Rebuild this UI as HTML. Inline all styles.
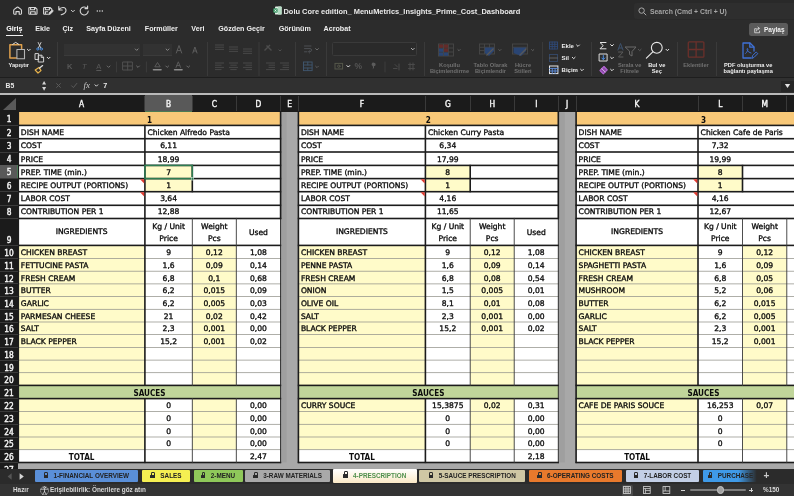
<!DOCTYPE html>
<html lang="tr"><head><meta charset="utf-8"><title>Dolu Core edition MenuMetrics Insights Prime Cost Dashboard</title>
<style>
html,body{margin:0;padding:0;background:#2c2c2c;}
body{width:794px;height:496px;overflow:hidden;font-family:"Liberation Sans",sans-serif;}
#app{will-change:transform;position:relative;width:794px;height:496px;overflow:hidden;background:#2c2c2c;}
#app div{position:absolute;}
#grid{left:0;top:0;width:794px;height:469px;overflow:hidden;}
.u{white-space:nowrap;font-family:"Liberation Sans",sans-serif;}
.b{font-weight:bold;}
.tab{top:24.3px;font-size:7.15px;color:#efefef;line-height:11px;}
.rl{font-size:5.7px;line-height:6.6px;text-align:center;white-space:nowrap;}
.dim{color:#585858;line-height:11px;}
.dimt{color:#707070;}
.sep{width:1px;background:#3a3a3a;}
.t{white-space:nowrap;font-family:"DejaVu Sans","Liberation Sans",sans-serif;font-size:7.6px;letter-spacing:0;color:#0c0c0c;-webkit-text-stroke:0.33px #0c0c0c;overflow:visible;height:12px;line-height:12px;}
.t.c{text-align:center;}
.t.l{text-align:left;}
.t.b{font-weight:bold;font-family:"DejaVu Sans Condensed","DejaVu Sans",sans-serif;font-size:8.1px;-webkit-text-stroke:0;}
.t.hd{color:#f4f4f4;font-family:"DejaVu Sans Condensed","DejaVu Sans",sans-serif;font-weight:normal;font-size:8.3px;letter-spacing:0;-webkit-text-stroke:0.4px #f4f4f4;}
.stab{top:470.3px;height:12px;border-radius:1px;font-size:6.35px;font-weight:bold;color:#222;line-height:12.4px;white-space:nowrap;text-align:center;overflow:hidden;}
.lk{display:inline-block;position:relative;width:4.4px;height:3.6px;background:#2a2a2a;border-radius:0.6px;margin-right:5.5px;vertical-align:0px;}
.lk:before{content:"";position:absolute;left:0.7px;top:-2.6px;width:1.8px;height:2.6px;border:0.7px solid #2a2a2a;border-bottom:none;border-radius:1.4px 1.4px 0 0;}

</style></head>
<body>
<div id="app">
<!-- ===== title bar ===== -->
<div style="left:0;top:0;width:794px;height:20px;background:#292929;"></div>
<div style="left:0;top:20px;width:794px;height:58px;background:#2c2c2c;"></div>
<div style="left:634px;top:3px;width:170px;height:16px;background:#2e2e2e;border-radius:3px;"></div>
<!-- quick access icons -->
<svg style="position:absolute;left:8px;top:0px" width="100" height="22" viewBox="8 0 100 22" fill="none" stroke="#d8d8d8" stroke-width="1.1" stroke-linecap="round" stroke-linejoin="round">
  <path d="M13.7 10.4 Q13.7 9.8 14.2 9.4 L17.1 7.2 Q17.6 6.9 18.1 7.2 L21 9.4 Q21.5 9.8 21.5 10.4 V13.6 Q21.5 14.2 20.9 14.2 H19.2 V11.6 H16 V14.2 H14.3 Q13.7 14.2 13.7 13.6 Z"/>
  <path d="M29.6 7.5 H35.2 L37 9.2 V13.4 Q37 14.2 36.2 14.2 H29.6 Q28.8 14.2 28.8 13.4 V8.3 Q28.8 7.5 29.6 7.5 Z M30.6 7.6 V9.8 H34.6 V7.6 M30.6 14.1 V11.8 H35.2 V14.1"/>
  <path d="M48 14.2 H44.4 Q43.6 14.2 43.6 13.4 V8.3 Q43.6 7.5 44.4 7.5 H50 L51.8 9.2 V10.2 M45.4 7.6 V9.8 H49.4 V7.6 M45.4 14.1 V11.8 H47.6"/>
  <path d="M48.8 14.4 L49.3 12.6 L52.2 9.9 L53.4 11.1 L50.5 13.9 Z" fill="#d8d8d8" stroke-width="0.7"/>
  <path d="M58.8 6.6 V10 H62.2 M59 9.8 C60.6 6.6 66 6.6 66 10.2 C66 12.6 63.8 14 61.2 14.8"/>
  <path d="M71.4 10.3 L72.9 11.8 L74.4 10.3" stroke-width="1"/>
  <path d="M87.2 8.3 A4 4 0 1 0 88.2 11 M87.6 6 V8.6 H85"/>
  <circle cx="97.3" cy="11" r="0.75" fill="#d8d8d8" stroke="none"/><circle cx="99.8" cy="11" r="0.75" fill="#d8d8d8" stroke="none"/><circle cx="102.3" cy="11" r="0.75" fill="#d8d8d8" stroke="none"/>
</svg>
<!-- title -->
<svg style="position:absolute;left:272.5px;top:6px" width="9" height="9" viewBox="0 0 9 9"><rect x="2" y="0.4" width="6.6" height="8.2" rx="0.9" fill="#e3f1e8"/><rect x="5" y="0.4" width="3.6" height="8.2" rx="0.7" fill="#b5dcc4"/><rect x="0.3" y="2.3" width="4.4" height="4.4" rx="0.7" fill="#3f9a68"/><path d="M1.6 3.5 L3.4 5.6 M3.4 3.5 L1.6 5.6" stroke="#fff" stroke-width="0.7"/></svg>
<div class="u b" style="left:283.5px;top:5.5px;font-size:7.45px;color:#e9e9e9;line-height:11px;">Dolu Core edıition_ MenuMetrics_Insights_Prime_Cost_Dashboard</div>
<svg style="position:absolute;left:637.5px;top:6.5px" width="9" height="9" viewBox="0 0 9 9" fill="none" stroke="#a9a9a9" stroke-width="1"><circle cx="3.6" cy="3.6" r="2.7"/><path d="M5.6 5.6 L8.2 8.2"/></svg>
<div class="u b" style="left:650px;top:5.5px;font-size:6.85px;color:#a6a6a6;line-height:11px;">Search (Cmd + Ctrl + U)</div>

<!-- ===== ribbon tabs ===== -->
<div class="u b tab" style="left:6.2px;color:#fff;">Giriş</div>
<div style="left:6px;top:35px;width:17px;height:1.4px;background:#f0f0f0;"></div>
<div class="u b tab" style="left:35.2px;">Ekle</div>
<div class="u b tab" style="left:62.4px;">Çiz</div>
<div class="u b tab" style="left:86.3px;">Sayfa Düzeni</div>
<div class="u b tab" style="left:144.8px;">Formüller</div>
<div class="u b tab" style="left:191.3px;">Veri</div>
<div class="u b tab" style="left:218.3px;">Gözden Geçir</div>
<div class="u b tab" style="left:278.7px;">Görünüm</div>
<div class="u b tab" style="left:323.6px;">Acrobat</div>
<!-- share -->
<div style="left:749.3px;top:23.2px;width:39.2px;height:12.9px;background:#5b5b5b;border-radius:2.5px;"></div>
<svg style="position:absolute;left:753.8px;top:26.2px" width="6.8" height="7.6" viewBox="0 0 8 9" fill="none" stroke="#e6e6e6" stroke-width="0.9" stroke-linejoin="round" stroke-linecap="round"><path d="M2.8 3.2 H0.8 V8 H6.6 V6"/><path d="M2.6 6 C2.8 3.8 4.2 2.8 5.6 2.8 M4.6 1.2 L6.6 2.8 L4.6 4.4"/></svg>
<div class="u b" style="left:764px;top:24.4px;font-size:6.5px;color:#f2f2f2;line-height:11px;">Paylaş</div>

<!-- ===== ribbon ===== -->
<!-- paste -->
<svg style="position:absolute;left:8px;top:41px" width="24" height="20" viewBox="8 41 24 20" fill="none" stroke-linejoin="round" stroke-linecap="round">
  <path d="M21.6 49 V44.8 H9.9 V58.1 H16.4" stroke="#dfa04c" stroke-width="1.5"/>
  <path d="M12.6 44.4 L15.7 42.4 L18.8 44.4" stroke="#d9d9d9" stroke-width="1"/>
  <rect x="16.9" y="49.5" width="7.6" height="9.3" stroke="#b5b5b5" stroke-width="1.1"/>
  <path d="M27.4 49.3 L28.8 50.7 L30.2 49.3" stroke="#e6e6e6" stroke-width="1"/>
</svg>
<div class="u b rl" style="left:3.7px;top:61.5px;width:30px;color:#ececec;">Yapıştır</div>
<!-- cut / copy / painter -->
<svg style="position:absolute;left:33px;top:41px" width="20" height="34" viewBox="0 0 20 34" fill="none" stroke-linecap="round" stroke-linejoin="round">
  <path d="M5.2 1.5 L7.8 7 M8 1.5 L5.4 7" stroke="#d6d6d6" stroke-width="0.9"/>
  <circle cx="4.8" cy="8" r="1.1" stroke="#4b8fe0" stroke-width="0.9"/><circle cx="8.4" cy="8" r="1.1" stroke="#4b8fe0" stroke-width="0.9"/>
  <path d="M5.5 18.5 H2 V12.6 H5.6 V18.5" stroke="#cfcfcf" stroke-width="1"/>
  <path d="M5.6 14.2 H8.6 L10.6 16 V21 H5.6 Z M8.2 14.4 V16.4 H10.4" stroke="#cfcfcf" stroke-width="1"/>
  <path d="M14.2 16.3 L15.6 17.7 L17 16.3" stroke="#e6e6e6" stroke-width="1"/>
  <path d="M2.2 29 L6 26.4 L8 29.6 L5 32 Z" stroke="#e8b34c" stroke-width="1.2"/>
  <path d="M6.6 27 L9.6 24.6" stroke="#dcdcdc" stroke-width="1.3"/>
</svg>
<div class="sep" style="left:57px;top:42px;height:34px;"></div>
<!-- font boxes -->
<div style="left:63.5px;top:43.5px;width:76.5px;height:12px;background:#323232;border-bottom:1px solid #3b3b3b;box-sizing:border-box;"></div>
<div style="left:143px;top:43.5px;width:28.5px;height:12px;background:#323232;border-bottom:1px solid #3b3b3b;box-sizing:border-box;"></div>
<svg style="position:absolute;left:60px;top:40px" width="150" height="38" viewBox="60 40 150 38" fill="none" stroke="#5d5d5d" stroke-width="1" stroke-linecap="round" stroke-linejoin="round">
  <path d="M135.3 49 L136.7 50.4 L138.1 49" stroke="#8a8a8a"/>
  <path d="M166.1 49 L167.5 50.4 L168.9 49" stroke="#8a8a8a"/>
  <path d="M176.3 53 L179 45.5 L181.7 53 M177.3 50.6 H180.7" />
  <path d="M192.8 53 L194.9 47 L197 53 M193.5 51 H196.3" />
  <path d="M107.2 66 L108.6 67.4 L110 66" stroke="#6e6e6e"/>
  <path d="M116.6 62 V72" stroke="#3d3d3d"/>
  <rect x="123" y="62" width="9.4" height="8" stroke="#505050"/><path d="M123 66 H132.4 M127.7 62 V70" stroke="#505050"/>
  <path d="M136.6 66 L138 67.4 L139.4 66" stroke="#6e6e6e"/>
  <path d="M146.4 62 V72" stroke="#3d3d3d"/>
  <path d="M155 66.5 L157.5 62.5 L160 66.5 Z" stroke="#5a5a5a"/>
  <path d="M153.5 69.8 H161" stroke="#8c8c8c" stroke-width="1.6"/>
  <path d="M165.8 66 L167.2 67.4 L168.6 66" stroke="#6e6e6e"/>
  <path d="M176 67.5 L178.3 61.8 L180.6 67.5 M176.8 65.6 H179.8" stroke="#5a5a5a"/>
  <path d="M174.6 69.8 H182" stroke="#8c8c8c" stroke-width="1.6"/>
  <path d="M186.8 66 L188.2 67.4 L189.6 66" stroke="#6e6e6e"/>
</svg>
<div class="u b dim" style="left:67px;top:60.5px;font-size:7.5px;">K</div>
<div class="u dim" style="left:82px;top:60.5px;font-size:7.5px;font-style:italic;">T</div>
<div class="u dim" style="left:96.3px;top:60.5px;font-size:7.5px;text-decoration:underline;">A</div>
<div class="sep" style="left:206.5px;top:42px;height:34px;"></div>
<!-- alignment -->
<svg style="position:absolute;left:210px;top:40px" width="90" height="38" viewBox="210 40 90 38" fill="none" stroke="#484848" stroke-width="1">
  <path d="M215 45 H224 M215 47.2 H224 M215 49.4 H224"/>
  <path d="M229 47 H238 M229 49.2 H238 M229 51.4 H238"/>
  <path d="M243 49 H252 M243 51.2 H252 M243 53.4 H252"/>
  <path d="M215 63 H224 M215 65.2 H221.5 M215 67.4 H224 M215 69.6 H221.5"/>
  <path d="M229 63 H238 M230.3 65.2 H236.7 M229 67.4 H238 M230.3 69.6 H236.7"/>
  <path d="M243 63 H252 M245.5 65.2 H252 M243 67.4 H252 M245.5 69.6 H252"/>
  <path d="M259 42 V76" stroke="#3a3a3a"/>
  <path d="M264.5 50.5 L270 45 M266.5 45.5 L271.5 50.5" stroke="#4d4d4d" stroke-width="1.4"/>
  <path d="M278.6 49.6 L280 51 L281.4 49.6" stroke="#505050"/>
  <path d="M266 63 H275 M268.6 65.2 H275 M268.6 67.4 H275 M266 69.6 H275"/>
  <path d="M280 63 H289 M282.6 65.2 H289 M282.6 67.4 H289 M280 69.6 H289"/>
</svg>
<div class="sep" style="left:295.3px;top:42px;height:34px;"></div>
<!-- wrap / merge -->
<svg style="position:absolute;left:300px;top:40px" width="125" height="38" viewBox="300 40 125 38" fill="none" stroke="#4c4c4c" stroke-width="1" stroke-linecap="round">
  <path d="M304.5 46 H311 M304.5 48.6 H310 Q311.6 48.6 311.6 50.2 Q311.6 51.8 309.4 51.8 M304.5 51.8 H307 M309.6 50.6 L308.4 51.8 L309.6 53" stroke="#505458" stroke-width="0.9"/>
  <path d="M315.6 48.6 L317 50 L318.4 48.6" stroke="#6a6a6a"/>
  <rect x="303.5" y="62" width="8.6" height="8.6" stroke="#3f546b"/><path d="M303.5 65 H312 M303.5 68 H312 M307.8 62 V65 M307.8 68 V70.6" stroke="#3f546b"/>
  <path d="M315.6 66.2 L317 67.6 L318.4 66.2" stroke="#5a5a5a"/>
</svg>
<div class="sep" style="left:326.4px;top:42px;height:34px;"></div>
<div style="left:332px;top:41.5px;width:85px;height:14.3px;background:#2a2a2a;border:1px solid #3a3a3a;border-radius:1.5px;box-sizing:border-box;"></div>
<svg style="position:absolute;left:330px;top:40px" width="95" height="38" viewBox="330 40 95 38" fill="none" stroke="#4c4c4c" stroke-width="1" stroke-linecap="round">
  <path d="M411.4 48.4 L412.8 49.8 L414.2 48.4" stroke="#bdbdbd"/>
  <rect x="335" y="63.4" width="7.6" height="5.6" stroke="#55574a"/><circle cx="338.8" cy="66.2" r="1.2" stroke="#55574a"/>
  <path d="M346.9 65.6 L348.3 67 L349.7 65.6" stroke="#e2e2e2"/>
  <path d="M385 62 V72" stroke="#3d3d3d"/>
  <path d="M393.5 68.5 H397 M399 64 V70 M395 64.5 L397.5 67" stroke="#4a4a4a"/>
  <path d="M408.5 64.5 H414.5 M408.5 68.5 H414.5 M410 63 V70 M413 63 V70" stroke="#4a4a4a"/>
</svg>
<div class="u b dim" style="left:354.5px;top:60.8px;font-size:8.5px;color:#555;">%</div>
<svg style="position:absolute;left:371px;top:62px" width="6" height="9" viewBox="0 0 6 9"><path d="M3 0.8 A1.7 1.7 0 1 1 2.9 4.2 C3.6 5.4 2.6 6.8 1.2 7.4 C2.2 6.4 2.4 5.2 1.6 3.9 A1.7 1.7 0 0 1 3 0.8 Z" fill="#5c5c5c"/></svg>
<div class="sep" style="left:423.7px;top:42px;height:34px;"></div>
<!-- conditional formatting etc -->
<svg style="position:absolute;left:436px;top:42px" width="100" height="17" viewBox="436 42 100 17" fill="none" stroke-width="0.9">
  <rect x="438.5" y="44" width="15" height="12" stroke="#474747"/><path d="M438.5 48 H453.5 M438.5 52 H453.5 M443.5 44 V56 M448.5 44 V56" stroke="#474747"/>
  <rect x="439" y="44.5" width="4.2" height="3.3" fill="#632b29" stroke="none"/><rect x="444" y="44.5" width="4.2" height="3.3" fill="#632b29" stroke="none"/><rect x="444" y="48.5" width="4.2" height="3.3" fill="#632b29" stroke="none"/>
  <rect x="439" y="48.5" width="4.2" height="3.3" fill="#2a4573" stroke="none"/><rect x="439" y="52.5" width="4.2" height="3.3" fill="#2a4573" stroke="none"/><rect x="444" y="52.5" width="4.2" height="3.3" fill="#2a4573" stroke="none"/>
  <path d="M457.6 49.3 L459 50.7 L460.4 49.3" stroke="#5f5f5f" stroke-width="1"/>
  <rect x="479.5" y="44" width="15" height="10" stroke="#474747"/><path d="M479.5 47.3 H494.5 M479.5 50.6 H494.5 M484.5 44 V54 M489.5 44 V54" stroke="#474747"/>
  <path d="M484.8 47.6 H494 V51 L489 56 L484.8 53 Z" fill="#2a4573" stroke="none"/>
  <path d="M486.5 55.5 L493.5 48.5" stroke="#585858" stroke-width="1.2"/>
  <path d="M498.4 49.3 L499.8 50.7 L501.2 49.3" stroke="#5f5f5f" stroke-width="1"/>
  <rect x="512.5" y="44" width="15" height="10" stroke="#474747"/><path d="M512.5 47.3 H527.5" stroke="#474747"/>
  <path d="M513.5 47.6 H526 V51 L521 56 L513.5 53 Z" fill="#2a4573" stroke="none"/>
  <path d="M519.5 55.5 L526.5 48.5" stroke="#585858" stroke-width="1.2"/>
  <path d="M531.3 49.3 L532.7 50.7 L534.1 49.3" stroke="#5f5f5f" stroke-width="1"/>
</svg>
<div class="u b rl dimt" style="left:419.5px;top:61.5px;width:60px;">Koşullu<br>Biçimlendirme</div>
<div class="u b rl dimt" style="left:460.5px;top:61.5px;width:60px;">Tablo Olarak<br>Biçimlendir</div>
<div class="u b rl dimt" style="left:493px;top:61.5px;width:60px;">Hücre<br>Stilleri</div>
<div class="sep" style="left:542.4px;top:42px;height:34px;"></div>
<!-- insert / delete / format -->
<svg style="position:absolute;left:547px;top:40px" width="40" height="38" viewBox="547 40 40 38" fill="none" stroke-width="0.9" stroke-linecap="round">
  <rect x="549.5" y="42" width="8" height="7" stroke="#2f4a78"/><path d="M549.5 44.3 H557.5 M549.5 46.6 H557.5 M552.2 42 V49 M554.8 42 V49" stroke="#2f4a78"/>
  <path d="M576.6 45 L578 46.4 L579.4 45" stroke="#e2e2e2" stroke-width="1"/>
  <rect x="549.5" y="54.5" width="8" height="7" stroke="#34496b"/><path d="M549.5 58 H557.5" stroke="#666"/>
  <path d="M572.3 57.3 L573.7 58.7 L575.1 57.3" stroke="#e2e2e2" stroke-width="1"/>
  <rect x="549.5" y="66" width="8.4" height="7.6" stroke="#e8e8e8" stroke-width="1"/><path d="M549.5 68.4 H557.9 M552.3 68.4 V73.6 M555.1 68.4 V73.6 M549.5 71 H557.9" stroke="#5d8fe0"/>
  <path d="M580.6 69.3 L582 70.7 L583.4 69.3" stroke="#e2e2e2" stroke-width="1"/>
</svg>
<div class="u b" style="left:561.6px;top:41.8px;font-size:6px;color:#ededed;line-height:8px;">Ekle</div>
<div class="u b" style="left:561.6px;top:54.1px;font-size:6px;color:#ededed;line-height:8px;">Sil</div>
<div class="u b" style="left:561.6px;top:66.1px;font-size:6px;color:#ededed;line-height:8px;">Biçim</div>
<div class="sep" style="left:591px;top:42px;height:34px;"></div>
<!-- editing group -->
<svg style="position:absolute;left:596px;top:40px" width="80" height="38" viewBox="596 40 80 38" fill="none" stroke-width="1" stroke-linecap="round" stroke-linejoin="round">
  <path d="M606 42.5 H600 L603.2 45.6 L600 48.8 H606" stroke="#e6e6e6"/>
  <path d="M610.6 44.6 L612 46 L613.4 44.6" stroke="#e6e6e6"/>
  <rect x="599.5" y="54" width="7.6" height="7" stroke="#dcdcdc"/><path d="M603.3 55.5 V59.5 M601.8 58 L603.3 59.6 L604.8 58" stroke="#4c8fe6"/>
  <path d="M610.6 57.3 L612 58.7 L613.4 57.3" stroke="#e6e6e6"/>
  <path d="M600 70.5 L604 66.5 L607.3 69.8 L603.3 73.8 Z" stroke="#b565d6" stroke-width="1.1" fill="#8d4aa8"/><path d="M601.8 68.7 L605.1 72" stroke="#e9d3f2" stroke-width="0.8"/>
  <path d="M610.6 69.3 L612 70.7 L613.4 69.3" stroke="#e6e6e6"/>
  <path d="M618 50 L620.5 43.5 L623 50 M619 48 H622" stroke="#3d526e"/>
  <path d="M618.5 52 H623 L618.5 57 H623" stroke="#5a5a5a"/>
  <path d="M625.5 47 H636 L632 51.5 V56 L629.5 54.5 V51.5 Z" stroke="#6a6a6a"/>
  <path d="M638.3 49.3 L639.7 50.7 L641.1 49.3" stroke="#5a5a5a"/>
  <circle cx="656.8" cy="47.8" r="5.4" stroke="#e6e6e6" stroke-width="1.1"/><path d="M652.8 51.8 L646.4 58.2" stroke="#e6e6e6" stroke-width="1.2"/>
  <path d="M666 49.3 L667.4 50.7 L668.8 49.3" stroke="#e6e6e6"/>
</svg>
<div class="u b rl dimt" style="left:599.7px;top:61.5px;width:60px;">Sırala ve<br>Filtrele</div>
<div class="u b rl" style="left:626.8px;top:61.5px;width:60px;color:#ececec;">Bul ve<br>Seç</div>
<div class="sep" style="left:676.6px;top:42px;height:34px;"></div>
<svg style="position:absolute;left:686px;top:40px" width="22" height="20" viewBox="686 40 22 20" fill="none" stroke="#6b302b" stroke-width="1.3"><rect x="688.3" y="41.8" width="15.6" height="15.4" rx="1"/><path d="M696.1 41.8 V57.2 M688.3 49.5 H703.9"/></svg>
<div class="u b rl dimt" style="left:666px;top:61.5px;width:60px;">Eklentiler</div>
<div class="sep" style="left:715.8px;top:42px;height:34px;"></div>
<svg style="position:absolute;left:740px;top:41px" width="20" height="20" viewBox="740 41 20 20" fill="none" stroke="#3f72d8" stroke-width="1.3" stroke-linejoin="round" stroke-linecap="round"><path d="M751 58 H743 V43 H750 L754 47 V51"/><path d="M749.8 43.2 V47.2 H753.8" /><path d="M745.5 53.5 C747.5 52 748.5 49 747.5 48.5 C746.5 48.5 747 52 751 53" stroke-width="0.9"/><path d="M752 58 L752.6 55.6 L756.2 52 L757.8 53.6 L754.2 57.2 Z" stroke-width="1"/></svg>
<div class="u b rl" style="left:708.2px;top:61.5px;width:80px;color:#ececec;">PDF oluşturma ve<br>bağlantı paylaşma</div>

<!-- ===== formula bar ===== -->
<div style="left:0;top:77.3px;width:794px;height:1px;background:#1e1e1e;"></div>
<div style="left:0;top:78.3px;width:794px;height:15px;background:#303030;"></div>
<div class="u b" style="left:5.6px;top:81px;font-size:6.8px;color:#e4e4e4;line-height:10px;">B5</div>
<svg style="position:absolute;left:40px;top:79px" width="70" height="14" viewBox="40 79 70 14" fill="none" stroke-linecap="round" stroke-linejoin="round">
  <path d="M42.1 84.6 L44.1 80.9 L46.1 84.6 Z M42.1 87.1 L44.1 90.8 L46.1 87.1 Z" fill="#d4d4d4" stroke="none"/>
  <path d="M56.6 83.6 L60.4 87.4 M60.4 83.6 L56.6 87.4" stroke="#5a5a5a" stroke-width="1"/>
  <path d="M71.6 85.8 L73.4 87.6 L76.8 83.4" stroke="#5a5a5a" stroke-width="1"/>
  <path d="M95 84.8 L96.4 86.2 L97.8 84.8" stroke="#dcdcdc" stroke-width="1"/>
</svg>
<div class="u" style="left:83.6px;top:79.3px;font-size:9px;color:#c9c9c9;font-style:italic;font-family:'Liberation Serif',serif;line-height:12px;">fx</div>
<div class="u b" style="left:103.3px;top:81px;font-size:7.2px;color:#ececec;line-height:10px;">7</div>
<div style="left:781px;top:80.5px;width:13px;height:11px;background:#262626;"></div>
<svg style="position:absolute;left:783.5px;top:83px" width="7" height="6" viewBox="0 0 7 6"><path d="M0.8 1 H6.2 L3.5 5 Z" fill="#e2e2e2"/></svg>

<div id="grid">
<svg style="position:absolute;left:0;top:0" width="794" height="469" viewBox="0 0 794 469"><rect x="18.00" y="112.00" width="776.00" height="357.00" fill="#a8a8a8"/><rect x="281.00" y="112.30" width="5.60" height="350.20" fill="#9f9f9f"/><rect x="559.00" y="112.30" width="5.80" height="350.20" fill="#9f9f9f"/><rect x="18.30" y="112.00" width="262.30" height="13.40" fill="#f8c878"/><rect x="18.30" y="125.40" width="262.30" height="120.00" fill="#ffffff"/><rect x="144.90" y="165.40" width="47.40" height="26.30" fill="#fffbc9"/><rect x="18.30" y="245.40" width="262.30" height="140.00" fill="#ffffff"/><rect x="18.30" y="245.40" width="126.60" height="140.00" fill="#fffbc9"/><rect x="192.30" y="245.40" width="44.00" height="140.00" fill="#fffbc9"/><rect x="18.30" y="385.40" width="262.30" height="13.20" fill="#c0d59a"/><rect x="18.30" y="398.60" width="262.30" height="63.90" fill="#ffffff"/><rect x="18.30" y="398.60" width="126.60" height="51.10" fill="#fffbc9"/><rect x="192.30" y="398.60" width="44.00" height="51.10" fill="#fffbc9"/><rect x="17.70" y="258.02" width="263.50" height="0.75" fill="#93938b"/><rect x="17.70" y="270.82" width="263.50" height="0.75" fill="#93938b"/><rect x="17.70" y="283.52" width="263.50" height="0.75" fill="#93938b"/><rect x="17.70" y="296.23" width="263.50" height="0.75" fill="#93938b"/><rect x="17.70" y="308.93" width="263.50" height="0.75" fill="#93938b"/><rect x="17.70" y="321.62" width="263.50" height="0.75" fill="#93938b"/><rect x="17.70" y="334.12" width="263.50" height="0.75" fill="#93938b"/><rect x="17.70" y="347.02" width="263.50" height="0.75" fill="#93938b"/><rect x="17.70" y="359.73" width="263.50" height="0.75" fill="#93938b"/><rect x="17.70" y="372.32" width="263.50" height="0.75" fill="#93938b"/><rect x="17.70" y="411.23" width="263.50" height="0.75" fill="#93938b"/><rect x="17.70" y="423.93" width="263.50" height="0.75" fill="#93938b"/><rect x="17.70" y="436.62" width="263.50" height="0.75" fill="#93938b"/><rect x="17.70" y="449.32" width="263.50" height="0.75" fill="#93938b"/><rect x="17.70" y="124.60" width="263.50" height="1.60" fill="#1c1c1c"/><rect x="17.70" y="137.90" width="263.50" height="1.60" fill="#1c1c1c"/><rect x="17.70" y="151.20" width="263.50" height="1.60" fill="#1c1c1c"/><rect x="17.70" y="164.60" width="263.50" height="1.60" fill="#1c1c1c"/><rect x="17.70" y="177.80" width="263.50" height="1.60" fill="#1c1c1c"/><rect x="17.70" y="190.90" width="263.50" height="1.60" fill="#1c1c1c"/><rect x="17.70" y="204.50" width="263.50" height="1.60" fill="#1c1c1c"/><rect x="17.70" y="217.70" width="263.50" height="1.60" fill="#1c1c1c"/><rect x="17.70" y="244.60" width="263.50" height="1.60" fill="#1c1c1c"/><rect x="17.70" y="384.60" width="263.50" height="1.60" fill="#1c1c1c"/><rect x="17.70" y="397.80" width="263.50" height="1.60" fill="#1c1c1c"/><rect x="17.70" y="461.70" width="263.50" height="1.60" fill="#1c1c1c"/><rect x="191.85" y="217.90" width="0.90" height="168.10" fill="#3a3a3a"/><rect x="191.85" y="398.00" width="0.90" height="65.10" fill="#3a3a3a"/><rect x="235.85" y="217.90" width="0.90" height="168.10" fill="#3a3a3a"/><rect x="235.85" y="398.00" width="0.90" height="65.10" fill="#3a3a3a"/><rect x="191.50" y="164.80" width="1.60" height="27.50" fill="#1c1c1c"/><rect x="144.10" y="124.80" width="1.60" height="261.20" fill="#1c1c1c"/><rect x="144.10" y="398.00" width="1.60" height="65.10" fill="#1c1c1c"/><rect x="17.50" y="111.40" width="1.60" height="351.70" fill="#1c1c1c"/><rect x="280.12" y="217.90" width="0.95" height="245.20" fill="#262626"/><rect x="279.80" y="111.40" width="1.60" height="107.70" fill="#1c1c1c"/><path d="M140.00 179.20 h4.2 v4.2 z" fill="#e23b30"/><path d="M140.00 192.30 h4.2 v4.2 z" fill="#e23b30"/><rect x="298.40" y="112.00" width="259.90" height="13.40" fill="#f8c878"/><rect x="298.40" y="125.40" width="259.90" height="120.00" fill="#ffffff"/><rect x="425.40" y="165.40" width="44.80" height="26.30" fill="#fffbc9"/><rect x="298.40" y="245.40" width="259.90" height="140.00" fill="#ffffff"/><rect x="298.40" y="245.40" width="127.00" height="140.00" fill="#fffbc9"/><rect x="470.20" y="245.40" width="44.00" height="140.00" fill="#fffbc9"/><rect x="298.40" y="385.40" width="259.90" height="13.20" fill="#c0d59a"/><rect x="298.40" y="398.60" width="259.90" height="63.90" fill="#ffffff"/><rect x="298.40" y="398.60" width="127.00" height="51.10" fill="#fffbc9"/><rect x="470.20" y="398.60" width="44.00" height="51.10" fill="#fffbc9"/><rect x="297.80" y="258.02" width="261.10" height="0.75" fill="#93938b"/><rect x="297.80" y="270.82" width="261.10" height="0.75" fill="#93938b"/><rect x="297.80" y="283.52" width="261.10" height="0.75" fill="#93938b"/><rect x="297.80" y="296.23" width="261.10" height="0.75" fill="#93938b"/><rect x="297.80" y="308.93" width="261.10" height="0.75" fill="#93938b"/><rect x="297.80" y="321.62" width="261.10" height="0.75" fill="#93938b"/><rect x="297.80" y="334.12" width="261.10" height="0.75" fill="#93938b"/><rect x="297.80" y="347.02" width="261.10" height="0.75" fill="#93938b"/><rect x="297.80" y="359.73" width="261.10" height="0.75" fill="#93938b"/><rect x="297.80" y="372.32" width="261.10" height="0.75" fill="#93938b"/><rect x="297.80" y="411.23" width="261.10" height="0.75" fill="#93938b"/><rect x="297.80" y="423.93" width="261.10" height="0.75" fill="#93938b"/><rect x="297.80" y="436.62" width="261.10" height="0.75" fill="#93938b"/><rect x="297.80" y="449.32" width="261.10" height="0.75" fill="#93938b"/><rect x="297.80" y="124.60" width="261.10" height="1.60" fill="#1c1c1c"/><rect x="297.80" y="137.90" width="261.10" height="1.60" fill="#1c1c1c"/><rect x="297.80" y="151.20" width="261.10" height="1.60" fill="#1c1c1c"/><rect x="297.80" y="164.60" width="261.10" height="1.60" fill="#1c1c1c"/><rect x="297.80" y="177.80" width="261.10" height="1.60" fill="#1c1c1c"/><rect x="297.80" y="190.90" width="261.10" height="1.60" fill="#1c1c1c"/><rect x="297.80" y="204.50" width="261.10" height="1.60" fill="#1c1c1c"/><rect x="297.80" y="217.70" width="261.10" height="1.60" fill="#1c1c1c"/><rect x="297.80" y="244.60" width="261.10" height="1.60" fill="#1c1c1c"/><rect x="297.80" y="384.60" width="261.10" height="1.60" fill="#1c1c1c"/><rect x="297.80" y="397.80" width="261.10" height="1.60" fill="#1c1c1c"/><rect x="297.80" y="461.70" width="261.10" height="1.60" fill="#1c1c1c"/><rect x="469.75" y="217.90" width="0.90" height="168.10" fill="#3a3a3a"/><rect x="469.75" y="398.00" width="0.90" height="65.10" fill="#3a3a3a"/><rect x="513.75" y="217.90" width="0.90" height="168.10" fill="#3a3a3a"/><rect x="513.75" y="398.00" width="0.90" height="65.10" fill="#3a3a3a"/><rect x="469.40" y="164.80" width="1.60" height="27.50" fill="#1c1c1c"/><rect x="424.60" y="124.80" width="1.60" height="261.20" fill="#1c1c1c"/><rect x="424.60" y="398.00" width="1.60" height="65.10" fill="#1c1c1c"/><rect x="297.60" y="111.40" width="1.60" height="351.70" fill="#1c1c1c"/><rect x="557.82" y="217.90" width="0.95" height="245.20" fill="#262626"/><rect x="557.50" y="111.40" width="1.60" height="107.70" fill="#1c1c1c"/><path d="M420.50 179.20 h4.2 v4.2 z" fill="#e23b30"/><path d="M420.50 192.30 h4.2 v4.2 z" fill="#e23b30"/><rect x="576.10" y="112.00" width="254.90" height="13.40" fill="#f8c878"/><rect x="576.10" y="125.40" width="254.90" height="120.00" fill="#ffffff"/><rect x="698.00" y="165.40" width="44.50" height="26.30" fill="#fffbc9"/><rect x="576.10" y="245.40" width="254.90" height="140.00" fill="#ffffff"/><rect x="576.10" y="245.40" width="121.90" height="140.00" fill="#fffbc9"/><rect x="742.50" y="245.40" width="44.30" height="140.00" fill="#fffbc9"/><rect x="576.10" y="385.40" width="254.90" height="13.20" fill="#c0d59a"/><rect x="576.10" y="398.60" width="254.90" height="63.90" fill="#ffffff"/><rect x="576.10" y="398.60" width="121.90" height="51.10" fill="#fffbc9"/><rect x="742.50" y="398.60" width="44.30" height="51.10" fill="#fffbc9"/><rect x="575.50" y="258.02" width="256.10" height="0.75" fill="#93938b"/><rect x="575.50" y="270.82" width="256.10" height="0.75" fill="#93938b"/><rect x="575.50" y="283.52" width="256.10" height="0.75" fill="#93938b"/><rect x="575.50" y="296.23" width="256.10" height="0.75" fill="#93938b"/><rect x="575.50" y="308.93" width="256.10" height="0.75" fill="#93938b"/><rect x="575.50" y="321.62" width="256.10" height="0.75" fill="#93938b"/><rect x="575.50" y="334.12" width="256.10" height="0.75" fill="#93938b"/><rect x="575.50" y="347.02" width="256.10" height="0.75" fill="#93938b"/><rect x="575.50" y="359.73" width="256.10" height="0.75" fill="#93938b"/><rect x="575.50" y="372.32" width="256.10" height="0.75" fill="#93938b"/><rect x="575.50" y="411.23" width="256.10" height="0.75" fill="#93938b"/><rect x="575.50" y="423.93" width="256.10" height="0.75" fill="#93938b"/><rect x="575.50" y="436.62" width="256.10" height="0.75" fill="#93938b"/><rect x="575.50" y="449.32" width="256.10" height="0.75" fill="#93938b"/><rect x="575.50" y="124.60" width="256.10" height="1.60" fill="#1c1c1c"/><rect x="575.50" y="137.90" width="256.10" height="1.60" fill="#1c1c1c"/><rect x="575.50" y="151.20" width="256.10" height="1.60" fill="#1c1c1c"/><rect x="575.50" y="164.60" width="256.10" height="1.60" fill="#1c1c1c"/><rect x="575.50" y="177.80" width="256.10" height="1.60" fill="#1c1c1c"/><rect x="575.50" y="190.90" width="256.10" height="1.60" fill="#1c1c1c"/><rect x="575.50" y="204.50" width="256.10" height="1.60" fill="#1c1c1c"/><rect x="575.50" y="217.70" width="256.10" height="1.60" fill="#1c1c1c"/><rect x="575.50" y="244.60" width="256.10" height="1.60" fill="#1c1c1c"/><rect x="575.50" y="384.60" width="256.10" height="1.60" fill="#1c1c1c"/><rect x="575.50" y="397.80" width="256.10" height="1.60" fill="#1c1c1c"/><rect x="575.50" y="461.70" width="256.10" height="1.60" fill="#1c1c1c"/><rect x="742.05" y="217.90" width="0.90" height="168.10" fill="#3a3a3a"/><rect x="742.05" y="398.00" width="0.90" height="65.10" fill="#3a3a3a"/><rect x="786.35" y="217.90" width="0.90" height="168.10" fill="#3a3a3a"/><rect x="786.35" y="398.00" width="0.90" height="65.10" fill="#3a3a3a"/><rect x="741.70" y="164.80" width="1.60" height="27.50" fill="#1c1c1c"/><rect x="697.20" y="124.80" width="1.60" height="261.20" fill="#1c1c1c"/><rect x="697.20" y="398.00" width="1.60" height="65.10" fill="#1c1c1c"/><rect x="575.30" y="111.40" width="1.60" height="351.70" fill="#1c1c1c"/><rect x="830.52" y="217.90" width="0.95" height="245.20" fill="#262626"/><rect x="830.20" y="111.40" width="1.60" height="107.70" fill="#1c1c1c"/><path d="M693.10 179.20 h4.2 v4.2 z" fill="#e23b30"/><path d="M693.10 192.30 h4.2 v4.2 z" fill="#e23b30"/><rect x="144.90" y="165.40" width="47.40" height="13.20" fill="none" stroke="#2e7c52" stroke-width="1.5"/><rect x="191.20" y="177.50" width="2.6" height="2.6" fill="#2e7c52" stroke="#fff" stroke-width="0.4"/></svg>
<div class="t c b" style="left:18.30px;top:114px;width:262.30px;">1</div>
<div class="t l" style="left:20.80px;top:127px;width:123.60px;">DISH NAME</div>
<div class="t l" style="left:20.80px;top:140px;width:123.60px;">COST</div>
<div class="t l" style="left:20.80px;top:154px;width:123.60px;">PRICE</div>
<div class="t l" style="left:20.80px;top:167px;width:123.60px;">PREP. TIME (min.)</div>
<div class="t l" style="left:20.80px;top:180px;width:123.60px;">RECIPE OUTPUT (PORTIONS)</div>
<div class="t l" style="left:20.80px;top:193px;width:123.60px;">LABOR COST</div>
<div class="t l" style="left:20.80px;top:206px;width:123.60px;">CONTRIBUTION PER 1</div>
<div class="t l" style="left:147.50px;top:127px;width:132.70px;">Chicken Alfredo Pasta</div>
<div class="t c" style="left:144.90px;top:140px;width:47.40px;">6,11</div>
<div class="t c" style="left:144.90px;top:154px;width:47.40px;">18,99</div>
<div class="t c" style="left:144.90px;top:167px;width:47.40px;">7</div>
<div class="t c" style="left:144.90px;top:180px;width:47.40px;">1</div>
<div class="t c" style="left:144.90px;top:193px;width:47.40px;">3,64</div>
<div class="t c" style="left:144.90px;top:206px;width:47.40px;">12,88</div>
<div class="t c" style="left:18.30px;top:226px;width:126.60px;">INGREDIENTS</div>
<div class="t c" style="left:144.90px;top:221px;width:47.40px;">Kg / Unit</div>
<div class="t c" style="left:144.90px;top:233px;width:47.40px;">Price</div>
<div class="t c" style="left:192.30px;top:221px;width:44.00px;">Weight</div>
<div class="t c" style="left:192.30px;top:233px;width:44.00px;">Pcs</div>
<div class="t c" style="left:236.30px;top:227px;width:44.30px;">Used</div>
<div class="t l" style="left:20.80px;top:247px;width:123.60px;">CHICKEN BREAST</div>
<div class="t c" style="left:144.90px;top:247px;width:47.40px;">9</div>
<div class="t c" style="left:192.30px;top:247px;width:44.00px;">0,12</div>
<div class="t c" style="left:236.30px;top:247px;width:44.30px;">1,08</div>
<div class="t l" style="left:20.80px;top:260px;width:123.60px;">FETTUCINE PASTA</div>
<div class="t c" style="left:144.90px;top:260px;width:47.40px;">1,6</div>
<div class="t c" style="left:192.30px;top:260px;width:44.00px;">0,09</div>
<div class="t c" style="left:236.30px;top:260px;width:44.30px;">0,14</div>
<div class="t l" style="left:20.80px;top:273px;width:123.60px;">FRESH CREAM</div>
<div class="t c" style="left:144.90px;top:273px;width:47.40px;">6,8</div>
<div class="t c" style="left:192.30px;top:273px;width:44.00px;">0,1</div>
<div class="t c" style="left:236.30px;top:273px;width:44.30px;">0,68</div>
<div class="t l" style="left:20.80px;top:285px;width:123.60px;">BUTTER</div>
<div class="t c" style="left:144.90px;top:285px;width:47.40px;">6,2</div>
<div class="t c" style="left:192.30px;top:285px;width:44.00px;">0,015</div>
<div class="t c" style="left:236.30px;top:285px;width:44.30px;">0,09</div>
<div class="t l" style="left:20.80px;top:298px;width:123.60px;">GARLIC</div>
<div class="t c" style="left:144.90px;top:298px;width:47.40px;">6,2</div>
<div class="t c" style="left:192.30px;top:298px;width:44.00px;">0,005</div>
<div class="t c" style="left:236.30px;top:298px;width:44.30px;">0,03</div>
<div class="t l" style="left:20.80px;top:311px;width:123.60px;">PARMESAN CHEESE</div>
<div class="t c" style="left:144.90px;top:311px;width:47.40px;">21</div>
<div class="t c" style="left:192.30px;top:311px;width:44.00px;">0,02</div>
<div class="t c" style="left:236.30px;top:311px;width:44.30px;">0,42</div>
<div class="t l" style="left:20.80px;top:323px;width:123.60px;">SALT</div>
<div class="t c" style="left:144.90px;top:323px;width:47.40px;">2,3</div>
<div class="t c" style="left:192.30px;top:323px;width:44.00px;">0,001</div>
<div class="t c" style="left:236.30px;top:323px;width:44.30px;">0,00</div>
<div class="t l" style="left:20.80px;top:336px;width:123.60px;">BLACK PEPPER</div>
<div class="t c" style="left:144.90px;top:336px;width:47.40px;">15,2</div>
<div class="t c" style="left:192.30px;top:336px;width:44.00px;">0,001</div>
<div class="t c" style="left:236.30px;top:336px;width:44.30px;">0,02</div>
<div class="t c b" style="left:18.30px;top:387px;width:262.30px;">SAUCES</div>
<div class="t c" style="left:144.90px;top:400px;width:47.40px;">0</div>
<div class="t c" style="left:236.30px;top:400px;width:44.30px;">0,00</div>
<div class="t c" style="left:144.90px;top:413px;width:47.40px;">0</div>
<div class="t c" style="left:236.30px;top:413px;width:44.30px;">0,00</div>
<div class="t c" style="left:144.90px;top:426px;width:47.40px;">0</div>
<div class="t c" style="left:236.30px;top:426px;width:44.30px;">0,00</div>
<div class="t c" style="left:144.90px;top:438px;width:47.40px;">0</div>
<div class="t c" style="left:236.30px;top:438px;width:44.30px;">0,00</div>
<div class="t c b" style="left:18.30px;top:451px;width:126.60px;">TOTAL</div>
<div class="t c" style="left:236.30px;top:451px;width:44.30px;">2,47</div>
<div class="t c b" style="left:298.40px;top:114px;width:259.90px;">2</div>
<div class="t l" style="left:300.90px;top:127px;width:124.00px;">DISH NAME</div>
<div class="t l" style="left:300.90px;top:140px;width:124.00px;">COST</div>
<div class="t l" style="left:300.90px;top:154px;width:124.00px;">PRICE</div>
<div class="t l" style="left:300.90px;top:167px;width:124.00px;">PREP. TIME (min.)</div>
<div class="t l" style="left:300.90px;top:180px;width:124.00px;">RECIPE OUTPUT (PORTIONS)</div>
<div class="t l" style="left:300.90px;top:193px;width:124.00px;">LABOR COST</div>
<div class="t l" style="left:300.90px;top:206px;width:124.00px;">CONTRIBUTION PER 1</div>
<div class="t l" style="left:428.00px;top:127px;width:129.90px;">Chicken Curry Pasta</div>
<div class="t c" style="left:425.40px;top:140px;width:44.80px;">6,34</div>
<div class="t c" style="left:425.40px;top:154px;width:44.80px;">17,99</div>
<div class="t c" style="left:425.40px;top:167px;width:44.80px;">8</div>
<div class="t c" style="left:425.40px;top:180px;width:44.80px;">1</div>
<div class="t c" style="left:425.40px;top:193px;width:44.80px;">4,16</div>
<div class="t c" style="left:425.40px;top:206px;width:44.80px;">11,65</div>
<div class="t c" style="left:298.40px;top:226px;width:127.00px;">INGREDIENTS</div>
<div class="t c" style="left:425.40px;top:221px;width:44.80px;">Kg / Unit</div>
<div class="t c" style="left:425.40px;top:233px;width:44.80px;">Price</div>
<div class="t c" style="left:470.20px;top:221px;width:44.00px;">Weight</div>
<div class="t c" style="left:470.20px;top:233px;width:44.00px;">Pcs</div>
<div class="t c" style="left:514.20px;top:227px;width:44.10px;">Used</div>
<div class="t l" style="left:300.90px;top:247px;width:124.00px;">CHICKEN BREAST</div>
<div class="t c" style="left:425.40px;top:247px;width:44.80px;">9</div>
<div class="t c" style="left:470.20px;top:247px;width:44.00px;">0,12</div>
<div class="t c" style="left:514.20px;top:247px;width:44.10px;">1,08</div>
<div class="t l" style="left:300.90px;top:260px;width:124.00px;">PENNE PASTA</div>
<div class="t c" style="left:425.40px;top:260px;width:44.80px;">1,6</div>
<div class="t c" style="left:470.20px;top:260px;width:44.00px;">0,09</div>
<div class="t c" style="left:514.20px;top:260px;width:44.10px;">0,14</div>
<div class="t l" style="left:300.90px;top:273px;width:124.00px;">FRESH CREAM</div>
<div class="t c" style="left:425.40px;top:273px;width:44.80px;">6,8</div>
<div class="t c" style="left:470.20px;top:273px;width:44.00px;">0,08</div>
<div class="t c" style="left:514.20px;top:273px;width:44.10px;">0,54</div>
<div class="t l" style="left:300.90px;top:285px;width:124.00px;">ONION</div>
<div class="t c" style="left:425.40px;top:285px;width:44.80px;">1,5</div>
<div class="t c" style="left:470.20px;top:285px;width:44.00px;">0,005</div>
<div class="t c" style="left:514.20px;top:285px;width:44.10px;">0,01</div>
<div class="t l" style="left:300.90px;top:298px;width:124.00px;">OLIVE OIL</div>
<div class="t c" style="left:425.40px;top:298px;width:44.80px;">8,1</div>
<div class="t c" style="left:470.20px;top:298px;width:44.00px;">0,01</div>
<div class="t c" style="left:514.20px;top:298px;width:44.10px;">0,08</div>
<div class="t l" style="left:300.90px;top:311px;width:124.00px;">SALT</div>
<div class="t c" style="left:425.40px;top:311px;width:44.80px;">2,3</div>
<div class="t c" style="left:470.20px;top:311px;width:44.00px;">0,001</div>
<div class="t c" style="left:514.20px;top:311px;width:44.10px;">0,00</div>
<div class="t l" style="left:300.90px;top:323px;width:124.00px;">BLACK PEPPER</div>
<div class="t c" style="left:425.40px;top:323px;width:44.80px;">15,2</div>
<div class="t c" style="left:470.20px;top:323px;width:44.00px;">0,001</div>
<div class="t c" style="left:514.20px;top:323px;width:44.10px;">0,02</div>
<div class="t c b" style="left:298.40px;top:387px;width:259.90px;">SAUCES</div>
<div class="t l" style="left:300.90px;top:400px;width:124.00px;">CURRY SOUCE</div>
<div class="t c" style="left:425.40px;top:400px;width:44.80px;">15,3875</div>
<div class="t c" style="left:470.20px;top:400px;width:44.00px;">0,02</div>
<div class="t c" style="left:514.20px;top:400px;width:44.10px;">0,31</div>
<div class="t c" style="left:425.40px;top:413px;width:44.80px;">0</div>
<div class="t c" style="left:514.20px;top:413px;width:44.10px;">0,00</div>
<div class="t c" style="left:425.40px;top:426px;width:44.80px;">0</div>
<div class="t c" style="left:514.20px;top:426px;width:44.10px;">0,00</div>
<div class="t c" style="left:425.40px;top:438px;width:44.80px;">0</div>
<div class="t c" style="left:514.20px;top:438px;width:44.10px;">0,00</div>
<div class="t c b" style="left:298.40px;top:451px;width:127.00px;">TOTAL</div>
<div class="t c" style="left:514.20px;top:451px;width:44.10px;">2,18</div>
<div class="t c b" style="left:576.10px;top:114px;width:254.90px;">3</div>
<div class="t l" style="left:578.60px;top:127px;width:118.90px;">DISH NAME</div>
<div class="t l" style="left:578.60px;top:140px;width:118.90px;">COST</div>
<div class="t l" style="left:578.60px;top:154px;width:118.90px;">PRICE</div>
<div class="t l" style="left:578.60px;top:167px;width:118.90px;">PREP. TIME (min.)</div>
<div class="t l" style="left:578.60px;top:180px;width:118.90px;">RECIPE OUTPUT (PORTIONS)</div>
<div class="t l" style="left:578.60px;top:193px;width:118.90px;">LABOR COST</div>
<div class="t l" style="left:578.60px;top:206px;width:118.90px;">CONTRIBUTION PER 1</div>
<div class="t l" style="left:700.60px;top:127px;width:130.00px;">Chicken Cafe de Paris</div>
<div class="t c" style="left:698.00px;top:140px;width:44.50px;">7,32</div>
<div class="t c" style="left:698.00px;top:154px;width:44.50px;">19,99</div>
<div class="t c" style="left:698.00px;top:167px;width:44.50px;">8</div>
<div class="t c" style="left:698.00px;top:180px;width:44.50px;">1</div>
<div class="t c" style="left:698.00px;top:193px;width:44.50px;">4,16</div>
<div class="t c" style="left:698.00px;top:206px;width:44.50px;">12,67</div>
<div class="t c" style="left:576.10px;top:226px;width:121.90px;">INGREDIENTS</div>
<div class="t c" style="left:698.00px;top:221px;width:44.50px;">Kg / Unit</div>
<div class="t c" style="left:698.00px;top:233px;width:44.50px;">Price</div>
<div class="t c" style="left:742.50px;top:221px;width:44.30px;">Weight</div>
<div class="t c" style="left:742.50px;top:233px;width:44.30px;">Pcs</div>
<div class="t c" style="left:786.80px;top:227px;width:44.20px;">Used</div>
<div class="t l" style="left:578.60px;top:247px;width:118.90px;">CHICKEN BREAST</div>
<div class="t c" style="left:698.00px;top:247px;width:44.50px;">9</div>
<div class="t c" style="left:742.50px;top:247px;width:44.30px;">0,12</div>
<div class="t c" style="left:786.80px;top:247px;width:44.20px;">1,08</div>
<div class="t l" style="left:578.60px;top:260px;width:118.90px;">SPAGHETTI PASTA</div>
<div class="t c" style="left:698.00px;top:260px;width:44.50px;">1,6</div>
<div class="t c" style="left:742.50px;top:260px;width:44.30px;">0,09</div>
<div class="t c" style="left:786.80px;top:260px;width:44.20px;">0,14</div>
<div class="t l" style="left:578.60px;top:273px;width:118.90px;">FRESH CREAM</div>
<div class="t c" style="left:698.00px;top:273px;width:44.50px;">6,8</div>
<div class="t c" style="left:742.50px;top:273px;width:44.30px;">0,05</div>
<div class="t c" style="left:786.80px;top:273px;width:44.20px;">0,34</div>
<div class="t l" style="left:578.60px;top:285px;width:118.90px;">MUSHROOM</div>
<div class="t c" style="left:698.00px;top:285px;width:44.50px;">5,2</div>
<div class="t c" style="left:742.50px;top:285px;width:44.30px;">0,06</div>
<div class="t c" style="left:786.80px;top:285px;width:44.20px;">0,31</div>
<div class="t l" style="left:578.60px;top:298px;width:118.90px;">BUTTER</div>
<div class="t c" style="left:698.00px;top:298px;width:44.50px;">6,2</div>
<div class="t c" style="left:742.50px;top:298px;width:44.30px;">0,015</div>
<div class="t c" style="left:786.80px;top:298px;width:44.20px;">0,09</div>
<div class="t l" style="left:578.60px;top:311px;width:118.90px;">GARLIC</div>
<div class="t c" style="left:698.00px;top:311px;width:44.50px;">6,2</div>
<div class="t c" style="left:742.50px;top:311px;width:44.30px;">0,005</div>
<div class="t c" style="left:786.80px;top:311px;width:44.20px;">0,03</div>
<div class="t l" style="left:578.60px;top:323px;width:118.90px;">SALT</div>
<div class="t c" style="left:698.00px;top:323px;width:44.50px;">2,3</div>
<div class="t c" style="left:742.50px;top:323px;width:44.30px;">0,001</div>
<div class="t c" style="left:786.80px;top:323px;width:44.20px;">0,00</div>
<div class="t l" style="left:578.60px;top:336px;width:118.90px;">BLACK PEPPER</div>
<div class="t c" style="left:698.00px;top:336px;width:44.50px;">15,2</div>
<div class="t c" style="left:742.50px;top:336px;width:44.30px;">0,001</div>
<div class="t c" style="left:786.80px;top:336px;width:44.20px;">0,02</div>
<div class="t c b" style="left:576.10px;top:387px;width:254.90px;">SAUCES</div>
<div class="t l" style="left:578.60px;top:400px;width:118.90px;">CAFE DE PARIS SOUCE</div>
<div class="t c" style="left:698.00px;top:400px;width:44.50px;">16,253</div>
<div class="t c" style="left:742.50px;top:400px;width:44.30px;">0,07</div>
<div class="t c" style="left:786.80px;top:400px;width:44.20px;">1,14</div>
<div class="t c" style="left:698.00px;top:413px;width:44.50px;">0</div>
<div class="t c" style="left:786.80px;top:413px;width:44.20px;">0,00</div>
<div class="t c" style="left:698.00px;top:426px;width:44.50px;">0</div>
<div class="t c" style="left:786.80px;top:426px;width:44.20px;">0,00</div>
<div class="t c" style="left:698.00px;top:438px;width:44.50px;">0</div>
<div class="t c" style="left:786.80px;top:438px;width:44.20px;">0,00</div>
<div class="t c b" style="left:576.10px;top:451px;width:121.90px;">TOTAL</div>
<div class="t c" style="left:786.80px;top:451px;width:44.20px;">3,02</div>
</div>
<div style="left:0.00px;top:94.60px;width:794.00px;height:17.60px;background:#1b1b1b;"></div>
<div style="left:0.00px;top:93.20px;width:794.00px;height:1.60px;background:#b9b9b9;"></div>
<div style="left:144.90px;top:95.00px;width:47.40px;height:17.00px;background:#595959;"></div>
<div style="left:144.90px;top:111.20px;width:47.40px;height:1.00px;background:#4a7a55;"></div>
<div class="t hd c" style="left:18.30px;top:98px;width:126.60px;">A</div>
<div style="left:144.00px;top:96.00px;width:1.00px;height:15.00px;background:#3a3a3a;"></div>
<div class="t hd c" style="left:144.90px;top:98px;width:47.40px;">B</div>
<div style="left:192.00px;top:96.00px;width:1.00px;height:15.00px;background:#3a3a3a;"></div>
<div class="t hd c" style="left:192.30px;top:98px;width:44.00px;">C</div>
<div style="left:236.00px;top:96.00px;width:1.00px;height:15.00px;background:#3a3a3a;"></div>
<div class="t hd c" style="left:236.30px;top:98px;width:44.30px;">D</div>
<div style="left:280.00px;top:96.00px;width:1.00px;height:15.00px;background:#3a3a3a;"></div>
<div class="t hd c" style="left:280.60px;top:98px;width:17.80px;">E</div>
<div style="left:298.00px;top:96.00px;width:1.00px;height:15.00px;background:#3a3a3a;"></div>
<div class="t hd c" style="left:298.40px;top:98px;width:127.00px;">F</div>
<div style="left:425.00px;top:96.00px;width:1.00px;height:15.00px;background:#3a3a3a;"></div>
<div class="t hd c" style="left:425.40px;top:98px;width:44.80px;">G</div>
<div style="left:470.00px;top:96.00px;width:1.00px;height:15.00px;background:#3a3a3a;"></div>
<div class="t hd c" style="left:470.20px;top:98px;width:44.00px;">H</div>
<div style="left:514.00px;top:96.00px;width:1.00px;height:15.00px;background:#3a3a3a;"></div>
<div class="t hd c" style="left:514.20px;top:98px;width:44.10px;">I</div>
<div style="left:558.00px;top:96.00px;width:1.00px;height:15.00px;background:#3a3a3a;"></div>
<div class="t hd c" style="left:558.30px;top:98px;width:17.80px;">J</div>
<div style="left:576.00px;top:96.00px;width:1.00px;height:15.00px;background:#3a3a3a;"></div>
<div class="t hd c" style="left:576.10px;top:98px;width:121.90px;">K</div>
<div style="left:698.00px;top:96.00px;width:1.00px;height:15.00px;background:#3a3a3a;"></div>
<div class="t hd c" style="left:698.00px;top:98px;width:44.50px;">L</div>
<div style="left:742.00px;top:96.00px;width:1.00px;height:15.00px;background:#3a3a3a;"></div>
<div class="t hd c" style="left:742.50px;top:98px;width:44.30px;">M</div>
<div style="left:786.00px;top:96.00px;width:1.00px;height:15.00px;background:#3a3a3a;"></div>
<div style="left:0.00px;top:95.00px;width:18.00px;height:17.00px;background:#1b1b1b;"></div>
<svg style="position:absolute;left:2px;top:97px" width="15" height="14" viewBox="0 0 15 14"><path d="M14 1V13H1Z" fill="#5a5a5a"/></svg>
<div style="left:0.00px;top:112.00px;width:18.00px;height:357.00px;background:#1b1b1b;"></div>
<div class="t hd c" style="left:0.00px;top:113px;width:18.00px;">1</div>
<div style="left:0.00px;top:124.90px;width:18.00px;height:1.00px;background:#3a3a3a;"></div>
<div class="t hd c" style="left:0.00px;top:127px;width:18.00px;">2</div>
<div style="left:0.00px;top:138.20px;width:18.00px;height:1.00px;background:#3a3a3a;"></div>
<div class="t hd c" style="left:0.00px;top:140px;width:18.00px;">3</div>
<div style="left:0.00px;top:151.50px;width:18.00px;height:1.00px;background:#3a3a3a;"></div>
<div class="t hd c" style="left:0.00px;top:153px;width:18.00px;">4</div>
<div style="left:0.00px;top:164.90px;width:18.00px;height:1.00px;background:#3a3a3a;"></div>
<div style="left:0.00px;top:165.40px;width:18.00px;height:13.20px;background:#595959;"></div>
<div style="left:17.20px;top:165.40px;width:1.00px;height:13.20px;background:#4a7a55;"></div>
<div class="t hd c" style="left:0.00px;top:166px;width:18.00px;">5</div>
<div style="left:0.00px;top:178.10px;width:18.00px;height:1.00px;background:#3a3a3a;"></div>
<div class="t hd c" style="left:0.00px;top:180px;width:18.00px;">6</div>
<div style="left:0.00px;top:191.20px;width:18.00px;height:1.00px;background:#3a3a3a;"></div>
<div class="t hd c" style="left:0.00px;top:193px;width:18.00px;">7</div>
<div style="left:0.00px;top:204.80px;width:18.00px;height:1.00px;background:#3a3a3a;"></div>
<div class="t hd c" style="left:0.00px;top:206px;width:18.00px;">8</div>
<div style="left:0.00px;top:218.00px;width:18.00px;height:1.00px;background:#3a3a3a;"></div>
<div class="t hd c" style="left:0.00px;top:234px;width:18.00px;">9</div>
<div style="left:0.00px;top:244.90px;width:18.00px;height:1.00px;background:#3a3a3a;"></div>
<div class="t hd c" style="left:0.00px;top:247px;width:18.00px;">10</div>
<div style="left:0.00px;top:257.90px;width:18.00px;height:1.00px;background:#3a3a3a;"></div>
<div class="t hd c" style="left:0.00px;top:260px;width:18.00px;">11</div>
<div style="left:0.00px;top:270.70px;width:18.00px;height:1.00px;background:#3a3a3a;"></div>
<div class="t hd c" style="left:0.00px;top:273px;width:18.00px;">12</div>
<div style="left:0.00px;top:283.40px;width:18.00px;height:1.00px;background:#3a3a3a;"></div>
<div class="t hd c" style="left:0.00px;top:285px;width:18.00px;">13</div>
<div style="left:0.00px;top:296.10px;width:18.00px;height:1.00px;background:#3a3a3a;"></div>
<div class="t hd c" style="left:0.00px;top:298px;width:18.00px;">14</div>
<div style="left:0.00px;top:308.80px;width:18.00px;height:1.00px;background:#3a3a3a;"></div>
<div class="t hd c" style="left:0.00px;top:311px;width:18.00px;">15</div>
<div style="left:0.00px;top:321.50px;width:18.00px;height:1.00px;background:#3a3a3a;"></div>
<div class="t hd c" style="left:0.00px;top:323px;width:18.00px;">16</div>
<div style="left:0.00px;top:334.00px;width:18.00px;height:1.00px;background:#3a3a3a;"></div>
<div class="t hd c" style="left:0.00px;top:336px;width:18.00px;">17</div>
<div style="left:0.00px;top:346.90px;width:18.00px;height:1.00px;background:#3a3a3a;"></div>
<div class="t hd c" style="left:0.00px;top:349px;width:18.00px;">18</div>
<div style="left:0.00px;top:359.60px;width:18.00px;height:1.00px;background:#3a3a3a;"></div>
<div class="t hd c" style="left:0.00px;top:362px;width:18.00px;">19</div>
<div style="left:0.00px;top:372.20px;width:18.00px;height:1.00px;background:#3a3a3a;"></div>
<div class="t hd c" style="left:0.00px;top:374px;width:18.00px;">20</div>
<div style="left:0.00px;top:384.90px;width:18.00px;height:1.00px;background:#3a3a3a;"></div>
<div class="t hd c" style="left:0.00px;top:387px;width:18.00px;">21</div>
<div style="left:0.00px;top:398.10px;width:18.00px;height:1.00px;background:#3a3a3a;"></div>
<div class="t hd c" style="left:0.00px;top:400px;width:18.00px;">22</div>
<div style="left:0.00px;top:411.10px;width:18.00px;height:1.00px;background:#3a3a3a;"></div>
<div class="t hd c" style="left:0.00px;top:413px;width:18.00px;">23</div>
<div style="left:0.00px;top:423.80px;width:18.00px;height:1.00px;background:#3a3a3a;"></div>
<div class="t hd c" style="left:0.00px;top:426px;width:18.00px;">24</div>
<div style="left:0.00px;top:436.50px;width:18.00px;height:1.00px;background:#3a3a3a;"></div>
<div class="t hd c" style="left:0.00px;top:438px;width:18.00px;">25</div>
<div style="left:0.00px;top:449.20px;width:18.00px;height:1.00px;background:#3a3a3a;"></div>
<div class="t hd c" style="left:0.00px;top:451px;width:18.00px;">26</div>
<div style="left:0.00px;top:462.00px;width:18.00px;height:1.00px;background:#3a3a3a;"></div>
<div class="t hd c" style="left:0.00px;top:464px;width:18.00px;">27</div>
<div style="left:0.00px;top:474.70px;width:18.00px;height:1.00px;background:#3a3a3a;"></div>
<!-- ===== sheet tabs ===== -->
<div style="left:0;top:469px;width:794px;height:15px;background:#2b2b2b;"></div>
<div style="left:0;top:484px;width:794px;height:12px;background:#333333;"></div>
<svg style="position:absolute;left:5px;top:472px" width="24" height="9" viewBox="0 0 24 9"><path d="M6.6 1.2 V7.8 L2.6 4.5 Z" fill="#565656"/><path d="M14.6 1.2 V7.8 L18.8 4.5 Z" fill="#d6d6d6"/></svg>
<div class="stab" style="left:34.5px;width:103.5px;background:#5a8fd8;"><span class="lk"></span>1-FINANCIAL OVERVIEW</div>
<div class="stab" style="left:142px;width:48px;background:#f5ef52;"><span class="lk"></span>SALES</div>
<div class="stab" style="left:193.5px;width:49px;background:#8fc85a;"><span class="lk"></span>2-MENU</div>
<div class="stab" style="left:245.3px;width:84.7px;background:#a9a9a9;"><span class="lk"></span>3-RAW MATERIALS</div>
<div class="stab" style="left:332.7px;width:84px;top:468.6px;height:14px;line-height:14.6px;background:linear-gradient(#ffffff,#fbe9c6);color:#4f8f4c;"><span class="lk"></span>4-PRESCRIPTION</div>
<div class="stab" style="left:419.3px;width:106px;background:#cfc7a4;"><span class="lk"></span>5-SAUCE PRESCRIPTION</div>
<div class="stab" style="left:528.5px;width:93.7px;background:#e8792c;"><span class="lk"></span>6-OPERATING COSTS</div>
<div class="stab" style="left:626px;width:73px;background:#c3cfe6;"><span class="lk"></span>7-LABOR COST</div>
<div class="stab" style="left:702.6px;width:56px;background:#3f9ae8;"><span class="lk"></span>PURCHASE</div>
<div style="left:738px;top:469.5px;width:22px;height:14px;background:linear-gradient(90deg,rgba(43,43,43,0),#2b2b2b 85%);"></div>
<div class="u b" style="left:763.5px;top:469.8px;font-size:10px;color:#c9c9c9;line-height:12px;">+</div>
<!-- ===== status bar ===== -->
<div class="u b" style="left:13px;top:485px;font-size:6.4px;color:#d9d9d9;line-height:10px;">Hazır</div>
<svg style="position:absolute;left:39.5px;top:485.5px" width="9" height="9" viewBox="0 0 9 9" fill="none" stroke="#d9d9d9" stroke-width="0.8" stroke-linecap="round"><circle cx="4.5" cy="1.6" r="0.9"/><path d="M1 3.2 H8 M4.5 3.2 V5.6 M4.5 5.6 L2.6 8.4 M4.5 5.6 L6.4 8.4"/><circle cx="4.5" cy="4.6" r="4" stroke-dasharray="1 1.2" stroke-width="0.6"/></svg>
<div class="u b" style="left:50px;top:485px;font-size:6.4px;color:#d9d9d9;line-height:10px;">Erişilebilirlik: Önerilere göz atın</div>
<div style="left:621.5px;top:484.5px;width:11px;height:11px;background:#4a4a4a;border-radius:1.5px;"></div>
<svg style="position:absolute;left:620px;top:484px" width="60" height="12" viewBox="620 484 60 12" fill="none" stroke="#d6d6d6" stroke-width="0.8">
  <rect x="623.6" y="486.6" width="6.8" height="6.8"/><path d="M623.6 488.9 H630.4 M623.6 491.1 H630.4 M625.9 486.6 V493.4 M628.1 486.6 V493.4"/>
  <rect x="643.4" y="486.6" width="6.8" height="6.8"/><path d="M643.4 488.6 H650.2 M645.4 488.6 V493.4 M645.4 490.6 H650.2"/>
  <rect x="663" y="486.6" width="6.8" height="6.8"/><path d="M665.2 486.6 V491 H669.8 M663 491 H665.2"/>
</svg>
<div style="left:680.5px;top:489.5px;width:4.6px;height:1px;background:#d6d6d6;"></div>
<div style="left:689.6px;top:489.4px;width:56.6px;height:1.2px;background:#7d7d7d;border-radius:1px;"></div>
<div style="left:717px;top:486.3px;width:7.4px;height:7.4px;background:#a2a2a2;border:0.6px solid #c8c8c8;box-sizing:border-box;border-radius:50%;"></div>
<div style="left:748.7px;top:489.5px;width:4.6px;height:1px;background:#d6d6d6;"></div>
<div style="left:750.5px;top:487.7px;width:1px;height:4.6px;background:#d6d6d6;"></div>
<div class="u b" style="left:763px;top:485px;font-size:6.4px;color:#d9d9d9;line-height:10px;">%150</div>

</div>
</body></html>
